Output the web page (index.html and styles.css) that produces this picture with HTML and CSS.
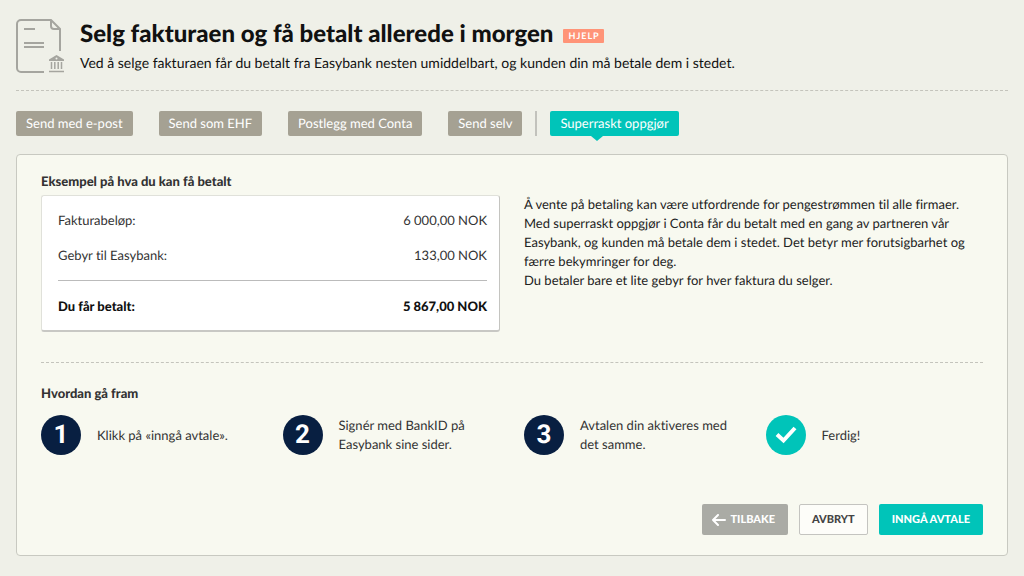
FILE: index.html
```html
<!DOCTYPE html>
<html lang="no">
<head>
    <meta charset="UTF-8">
    <meta name="viewport" content="width=device-width, initial-scale=1.0">
    <title>Selg fakturaen</title>
    <link rel="stylesheet" href="styles.css">
</head>
<body>
    <header class="header">
        <svg class="header-icon" width="50" height="56" viewBox="0 0 50 56" fill="none" stroke="#a5a59f" stroke-width="2" aria-hidden="true">
            <path d="M28 54H5a4 4 0 0 1-4-4V6a4 4 0 0 1 4-4h30l9 9v22"/>
            <path d="M35 2v6a3 3 0 0 0 3 3h6"/>
            <path d="M8 11h11M8 25h20M8 29h20"/>
            <path d="M33 53.500h15" stroke-width="1.500"/>
            <path d="M35.500 44v7M38.800 44v7M42.200 44v7M45.500 44v7" stroke-width="1.500"/>
            <path d="M33 43v-1.500l7.500-4.500 7.500 4.500v1.500z" fill="#a5a59f" stroke="none"/>
            <circle cx="40.500" cy="40.500" r="1" fill="#eff0e8" stroke="none"/>
        </svg>
        <div>
            <div class="title-row">
                <h1>Selg fakturaen og få betalt allerede i morgen</h1>
                <a href="#" class="help">HJELP</a>
            </div>
            <p class="subtitle">Ved å selge fakturaen får du betalt fra Easybank nesten umiddelbart, og kunden din må betale dem i stedet.</p>
        </div>
    </header>

    <nav class="tabs">
        <div class="tab-group">
            <button class="tab">Send med e-post</button>
            <button class="tab">Send som EHF</button>
            <button class="tab">Postlegg med Conta</button>
            <button class="tab">Send selv</button>
        </div>
        <span class="divider"></span>
        <button class="tab active">Superraskt oppgjør</button>
    </nav>

    <main class="panel">
        <h2>Eksempel på hva du kan få betalt</h2>
        <div class="example">
            <div class="card">
                <table class="amounts">
                    <tbody>
                        <tr>
                            <th>Fakturabeløp:</th>
                            <td>6 000,00 NOK</td>
                        </tr>
                        <tr class="fee">
                            <th>Gebyr til Easybank:</th>
                            <td>133,00 NOK</td>
                        </tr>
                    </tbody>
                    <tfoot>
                        <tr class="total">
                            <th>Du får betalt:</th>
                            <td>5 867,00 NOK</td>
                        </tr>
                    </tfoot>
                </table>
            </div>
            <div class="info">
                <p>Å vente på betaling kan være utfordrende for pengestrømmen til alle firmaer. Med superraskt oppgjør i Conta får du betalt med en gang av partneren vår Easybank, og kunden må betale dem i stedet. Det betyr mer forutsigbarhet og færre bekymringer for deg.</p>
                <p>Du betaler bare et lite gebyr for hver faktura du selger.</p>
            </div>
        </div>

        <section class="how">
            <h2>Hvordan gå fram</h2>
            <ol class="steps">
                <li>
                    <span class="circle">1</span>
                    <span>Klikk på «inngå avtale».</span>
                </li>
                <li>
                    <span class="circle">2</span>
                    <span>Signér med BankID på Easybank sine sider.</span>
                </li>
                <li>
                    <span class="circle">3</span>
                    <span>Avtalen din aktiveres med det samme.</span>
                </li>
                <li>
                    <span class="circle done">
                        <svg width="22" height="18" viewBox="0 0 22 18" fill="none" stroke="#fff" stroke-width="4" aria-hidden="true">
                            <path d="M2 8.500l6.500 6L20 2"/>
                        </svg>
                    </span>
                    <span>Ferdig!</span>
                </li>
            </ol>
        </section>

        <div class="actions">
            <button class="btn back">
                <svg width="14" height="12" viewBox="0 0 14 12" fill="none" stroke="#fff" stroke-width="2" stroke-linecap="round" stroke-linejoin="round" aria-hidden="true">
                    <path d="M13 6H1M6 1L1 6l5 5"/>
                </svg>
                TILBAKE
            </button>
            <button class="btn cancel">AVBRYT</button>
            <button class="btn submit">INNGÅ AVTALE</button>
        </div>
    </main>
</body>
</html>
```

FILE: styles.css
```css
* {
    box-sizing: border-box;
}
body {
    margin: 0;
    padding: 16px;
    background: #eff0e8;
    color: #333;
    font-family: Lato, sans-serif;
    font-size: 13px;
    line-height: 19px;
    text-rendering: geometricPrecision;
    font-variant-ligatures: none;
}
h1, h2, p {
    margin: 0;
}
button {
    font-family: inherit;
    text-rendering: inherit;
    cursor: pointer;
}
.header {
    display: flex;
    gap: 14px;
    padding-bottom: 15px;
    border-bottom: 1px dashed #c4c4bc;
}
.header-icon {
    flex: none;
    margin-top: 2px;
}
.title-row {
    display: flex;
    align-items: center;
    gap: 10px;
}
h1 {
    font-size: 24px;
    font-weight: 900;
    line-height: 35px;
    color: #111;
}
.help {
    margin-top: 4px;
    padding: 0 4px 0 5px;
    background: #ff9478;
    border-radius: 1px;
    color: #fff;
    font-size: 9px;
    font-weight: 700;
    line-height: 14px;
    letter-spacing: 1px;
    text-decoration: none;
}
.subtitle {
    font-size: 14px;
    line-height: 24px;
    color: #111;
}
.tabs {
    display: flex;
    gap: 13px;
    margin: 20px 0 18px;
}
.tab-group {
    display: flex;
    gap: 26px;
}
.tab {
    position: relative;
    padding: 0 10px;
    border: none;
    border-radius: 2px;
    background: #a5a193;
    color: #fff;
    font-size: 13px;
    line-height: 25px;
}
.tab.active {
    background: #00c4b9;
}
.tab.active::after {
    content: "";
    position: absolute;
    top: 100%;
    left: 41px;
    border: 6px solid transparent;
    border-top: 5px solid #00c4b9;
    border-bottom: none;
}
.divider {
    width: 2px;
    background: #c2c2bc;
}
.panel {
    padding: 17px 24px 20px;
    background: #f8f9f0;
    border: 1px solid #c8c9c1;
    border-radius: 4px;
}
h2 {
    font-size: 13px;
    font-weight: 900;
    line-height: 19px;
}
.example {
    display: grid;
    grid-template-columns: 1fr 1fr;
    gap: 24px;
    margin-top: 4px;
    padding-bottom: 30px;
    border-bottom: 1px dashed #c4c4bc;
}
.card {
    padding: 7px 12px 6px 16px;
    background: #fff;
    border: 1px solid #e0e1da;
    border-right-color: #c4c4c0;
    border-bottom: 2px solid #c8c8c4;
    border-radius: 3px;
}
.amounts {
    width: 100%;
    border-collapse: collapse;
}
.amounts th {
    padding: 8px 0;
    font-weight: 400;
    text-align: left;
}
.amounts td {
    padding: 8px 0;
    text-align: right;
}
.amounts .fee th,
.amounts .fee td {
    padding-bottom: 15px;
}
.amounts .total th,
.amounts .total td {
    padding: 16px 0 8px;
    border-top: 1px solid #bbb;
    color: #111;
    font-weight: 900;
}
.info {
    color: #222;
}
.how {
    margin-top: 21px;
}
.steps {
    display: grid;
    grid-template-columns: repeat(4, 1fr);
    gap: 24px;
    margin: 12px 0 0;
    padding: 0;
    list-style: none;
}
.steps li {
    display: flex;
    align-items: center;
    gap: 16px;
}
.circle {
    display: flex;
    flex: none;
    align-items: center;
    justify-content: center;
    width: 40px;
    height: 40px;
    border-radius: 50%;
    background: #081f41;
    color: #fff;
    font-family: Roboto, sans-serif;
    font-size: 26px;
    font-weight: bold;
}
.circle.done {
    background: #00c4b9;
}
.actions {
    display: flex;
    justify-content: flex-end;
    gap: 11px;
    margin-top: 49px;
}
.btn {
    display: flex;
    align-items: center;
    gap: 4px;
    height: 31px;
    padding: 0 12px;
    border: 1px solid transparent;
    border-radius: 2px;
    color: #fff;
    font-size: 11px;
    font-weight: 900;
}
.back {
    padding: 0 12px 0 9px;
    background: #aaaba5;
}
.cancel {
    background: #fdfdf9;
    border-color: #c4c4c0;
    color: #444;
}
.submit {
    background: #00c4b9;
}
```
